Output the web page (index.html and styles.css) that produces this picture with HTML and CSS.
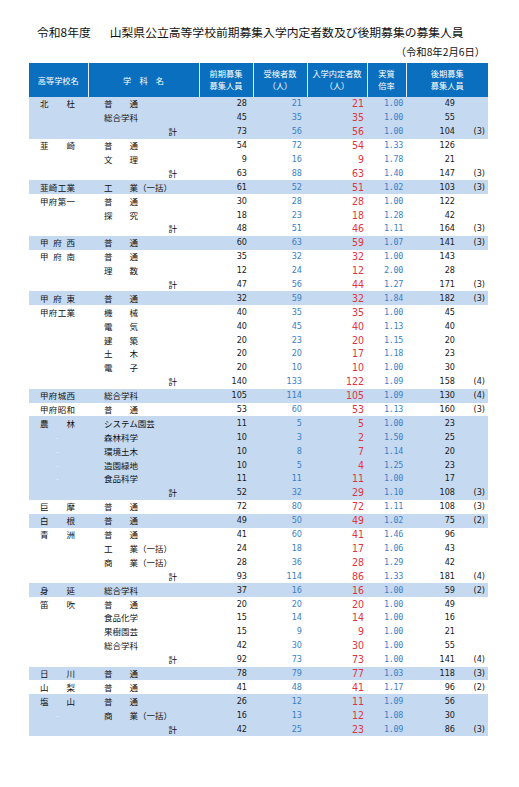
FILE: index.html
```html
<!DOCTYPE html>
<html lang="ja">
<head>
<meta charset="utf-8">
<title>令和8年度 山梨県公立高等学校前期募集入学内定者数及び後期募集の募集人員</title>
<link rel="stylesheet" href="styles.css">
</head>
<body>
<div class="page">
  <h1 class="title"><span class="yr">令和8年度</span><span class="main">山梨県公立高等学校前期募集入学内定者数及び後期募集の募集人員</span></h1>
  <p class="date">（令和8年2月6日）</p>
  <table class="tbl">
    <colgroup>
      <col class="w1"><col class="w2"><col class="w3"><col class="w4"><col class="w5"><col class="w6"><col class="w7">
    </colgroup>
    <thead>
      <tr>
        <th>高等学校名</th>
        <th>学　科　名</th>
        <th><span class="hl">前期募集</span><span class="hl">募集人員</span></th>
        <th><span class="hl">受検者数</span><span class="hl">（人）</span></th>
        <th><span class="hl">入学内定者数</span><span class="hl">（人）</span></th>
        <th><span class="hl">実質</span><span class="hl">倍率</span></th>
        <th><span class="hl">後期募集</span><span class="hl">募集人員</span></th>
      </tr>
    </thead>
    <tbody>
      <!-- 北杜 -->
      <tr class="s"><td class="sch">北　杜</td><td class="sub"><span class="j">普　通</span></td><td class="n3">28</td><td class="n4">21</td><td class="n5">21</td><td class="n6">1.00</td><td class="n7"><span class="kn">49</span><span class="kp"></span></td></tr>
      <tr class="s"><td class="sch"></td><td class="sub">総合学科</td><td class="n3">45</td><td class="n4">35</td><td class="n5">35</td><td class="n6">1.00</td><td class="n7"><span class="kn">55</span><span class="kp"></span></td></tr>
      <tr class="s"><td class="sch"></td><td class="sub tot">計</td><td class="n3">73</td><td class="n4">56</td><td class="n5">56</td><td class="n6">1.00</td><td class="n7"><span class="kn">104</span><span class="kp">(3)</span></td></tr>
      <!-- 韮崎 -->
      <tr><td class="sch">韮　崎</td><td class="sub"><span class="j">普　通</span></td><td class="n3">54</td><td class="n4">72</td><td class="n5">54</td><td class="n6">1.33</td><td class="n7"><span class="kn">126</span><span class="kp"></span></td></tr>
      <tr><td class="sch"></td><td class="sub"><span class="j">文　理</span></td><td class="n3">9</td><td class="n4">16</td><td class="n5">9</td><td class="n6">1.78</td><td class="n7"><span class="kn">21</span><span class="kp"></span></td></tr>
      <tr><td class="sch"></td><td class="sub tot">計</td><td class="n3">63</td><td class="n4">88</td><td class="n5">63</td><td class="n6">1.40</td><td class="n7"><span class="kn">147</span><span class="kp">(3)</span></td></tr>
      <!-- 韮崎工業 -->
      <tr class="s"><td class="sch">韮崎工業</td><td class="sub"><span class="j">工　業</span>（一括）</td><td class="n3">61</td><td class="n4">52</td><td class="n5">51</td><td class="n6">1.02</td><td class="n7"><span class="kn">103</span><span class="kp">(3)</span></td></tr>
      <!-- 甲府第一 -->
      <tr><td class="sch">甲府第一</td><td class="sub"><span class="j">普　通</span></td><td class="n3">30</td><td class="n4">28</td><td class="n5">28</td><td class="n6">1.00</td><td class="n7"><span class="kn">122</span><span class="kp"></span></td></tr>
      <tr><td class="sch"></td><td class="sub"><span class="j">探　究</span></td><td class="n3">18</td><td class="n4">23</td><td class="n5">18</td><td class="n6">1.28</td><td class="n7"><span class="kn">42</span><span class="kp"></span></td></tr>
      <tr><td class="sch"></td><td class="sub tot">計</td><td class="n3">48</td><td class="n4">51</td><td class="n5">46</td><td class="n6">1.11</td><td class="n7"><span class="kn">164</span><span class="kp">(3)</span></td></tr>
      <!-- 甲府西 -->
      <tr class="s"><td class="sch">甲府西</td><td class="sub"><span class="j">普　通</span></td><td class="n3">60</td><td class="n4">63</td><td class="n5">59</td><td class="n6">1.07</td><td class="n7"><span class="kn">141</span><span class="kp">(3)</span></td></tr>
      <!-- 甲府南 -->
      <tr><td class="sch">甲府南</td><td class="sub"><span class="j">普　通</span></td><td class="n3">35</td><td class="n4">32</td><td class="n5">32</td><td class="n6">1.00</td><td class="n7"><span class="kn">143</span><span class="kp"></span></td></tr>
      <tr><td class="sch"></td><td class="sub"><span class="j">理　数</span></td><td class="n3">12</td><td class="n4">24</td><td class="n5">12</td><td class="n6">2.00</td><td class="n7"><span class="kn">28</span><span class="kp"></span></td></tr>
      <tr><td class="sch"></td><td class="sub tot">計</td><td class="n3">47</td><td class="n4">56</td><td class="n5">44</td><td class="n6">1.27</td><td class="n7"><span class="kn">171</span><span class="kp">(3)</span></td></tr>
      <!-- 甲府東 -->
      <tr class="s"><td class="sch">甲府東</td><td class="sub"><span class="j">普　通</span></td><td class="n3">32</td><td class="n4">59</td><td class="n5">32</td><td class="n6">1.84</td><td class="n7"><span class="kn">182</span><span class="kp">(3)</span></td></tr>
      <!-- 甲府工業 -->
      <tr><td class="sch">甲府工業</td><td class="sub"><span class="j">機　械</span></td><td class="n3">40</td><td class="n4">35</td><td class="n5">35</td><td class="n6">1.00</td><td class="n7"><span class="kn">45</span><span class="kp"></span></td></tr>
      <tr><td class="sch"></td><td class="sub"><span class="j">電　気</span></td><td class="n3">40</td><td class="n4">45</td><td class="n5">40</td><td class="n6">1.13</td><td class="n7"><span class="kn">40</span><span class="kp"></span></td></tr>
      <tr><td class="sch"></td><td class="sub"><span class="j">建　築</span></td><td class="n3">20</td><td class="n4">23</td><td class="n5">20</td><td class="n6">1.15</td><td class="n7"><span class="kn">20</span><span class="kp"></span></td></tr>
      <tr><td class="sch"></td><td class="sub"><span class="j">土　木</span></td><td class="n3">20</td><td class="n4">20</td><td class="n5">17</td><td class="n6">1.18</td><td class="n7"><span class="kn">23</span><span class="kp"></span></td></tr>
      <tr><td class="sch"></td><td class="sub"><span class="j">電　子</span></td><td class="n3">20</td><td class="n4">10</td><td class="n5">10</td><td class="n6">1.00</td><td class="n7"><span class="kn">30</span><span class="kp"></span></td></tr>
      <tr><td class="sch"></td><td class="sub tot">計</td><td class="n3">140</td><td class="n4">133</td><td class="n5">122</td><td class="n6">1.09</td><td class="n7"><span class="kn">158</span><span class="kp">(4)</span></td></tr>
      <!-- 甲府城西 -->
      <tr class="s"><td class="sch">甲府城西</td><td class="sub">総合学科</td><td class="n3">105</td><td class="n4">114</td><td class="n5">105</td><td class="n6">1.09</td><td class="n7"><span class="kn">130</span><span class="kp">(4)</span></td></tr>
      <!-- 甲府昭和 -->
      <tr><td class="sch">甲府昭和</td><td class="sub"><span class="j">普　通</span></td><td class="n3">53</td><td class="n4">60</td><td class="n5">53</td><td class="n6">1.13</td><td class="n7"><span class="kn">160</span><span class="kp">(3)</span></td></tr>
      <!-- 農林 -->
      <tr class="s"><td class="sch">農　林</td><td class="sub">システム園芸</td><td class="n3">11</td><td class="n4">5</td><td class="n5">5</td><td class="n6">1.00</td><td class="n7"><span class="kn">23</span><span class="kp"></span></td></tr>
      <tr class="s"><td class="sch dash">-</td><td class="sub">森林科学</td><td class="n3">10</td><td class="n4">3</td><td class="n5">2</td><td class="n6">1.50</td><td class="n7"><span class="kn">25</span><span class="kp"></span></td></tr>
      <tr class="s"><td class="sch dash">-</td><td class="sub">環境土木</td><td class="n3">10</td><td class="n4">8</td><td class="n5">7</td><td class="n6">1.14</td><td class="n7"><span class="kn">20</span><span class="kp"></span></td></tr>
      <tr class="s"><td class="sch dash">-</td><td class="sub">造園緑地</td><td class="n3">10</td><td class="n4">5</td><td class="n5">4</td><td class="n6">1.25</td><td class="n7"><span class="kn">23</span><span class="kp"></span></td></tr>
      <tr class="s"><td class="sch dash">-</td><td class="sub">食品科学</td><td class="n3">11</td><td class="n4">11</td><td class="n5">11</td><td class="n6">1.00</td><td class="n7"><span class="kn">17</span><span class="kp"></span></td></tr>
      <tr class="s"><td class="sch"></td><td class="sub tot">計</td><td class="n3">52</td><td class="n4">32</td><td class="n5">29</td><td class="n6">1.10</td><td class="n7"><span class="kn">108</span><span class="kp">(3)</span></td></tr>
      <!-- 巨摩 -->
      <tr><td class="sch">巨　摩</td><td class="sub"><span class="j">普　通</span></td><td class="n3">72</td><td class="n4">80</td><td class="n5">72</td><td class="n6">1.11</td><td class="n7"><span class="kn">108</span><span class="kp">(3)</span></td></tr>
      <!-- 白根 -->
      <tr class="s"><td class="sch">白　根</td><td class="sub"><span class="j">普　通</span></td><td class="n3">49</td><td class="n4">50</td><td class="n5">49</td><td class="n6">1.02</td><td class="n7"><span class="kn">75</span><span class="kp">(2)</span></td></tr>
      <!-- 青洲 -->
      <tr><td class="sch">青　洲</td><td class="sub"><span class="j">普　通</span></td><td class="n3">41</td><td class="n4">60</td><td class="n5">41</td><td class="n6">1.46</td><td class="n7"><span class="kn">96</span><span class="kp"></span></td></tr>
      <tr><td class="sch"></td><td class="sub"><span class="j">工　業</span>（一括）</td><td class="n3">24</td><td class="n4">18</td><td class="n5">17</td><td class="n6">1.06</td><td class="n7"><span class="kn">43</span><span class="kp"></span></td></tr>
      <tr><td class="sch"></td><td class="sub"><span class="j">商　業</span>（一括）</td><td class="n3">28</td><td class="n4">36</td><td class="n5">28</td><td class="n6">1.29</td><td class="n7"><span class="kn">42</span><span class="kp"></span></td></tr>
      <tr><td class="sch"></td><td class="sub tot">計</td><td class="n3">93</td><td class="n4">114</td><td class="n5">86</td><td class="n6">1.33</td><td class="n7"><span class="kn">181</span><span class="kp">(4)</span></td></tr>
      <!-- 身延 -->
      <tr class="s"><td class="sch">身　延</td><td class="sub">総合学科</td><td class="n3">37</td><td class="n4">16</td><td class="n5">16</td><td class="n6">1.00</td><td class="n7"><span class="kn">59</span><span class="kp">(2)</span></td></tr>
      <!-- 笛吹 -->
      <tr><td class="sch">笛　吹</td><td class="sub"><span class="j">普　通</span></td><td class="n3">20</td><td class="n4">20</td><td class="n5">20</td><td class="n6">1.00</td><td class="n7"><span class="kn">49</span><span class="kp"></span></td></tr>
      <tr><td class="sch"></td><td class="sub">食品化学</td><td class="n3">15</td><td class="n4">14</td><td class="n5">14</td><td class="n6">1.00</td><td class="n7"><span class="kn">16</span><span class="kp"></span></td></tr>
      <tr><td class="sch"></td><td class="sub">果樹園芸</td><td class="n3">15</td><td class="n4">9</td><td class="n5">9</td><td class="n6">1.00</td><td class="n7"><span class="kn">21</span><span class="kp"></span></td></tr>
      <tr><td class="sch"></td><td class="sub">総合学科</td><td class="n3">42</td><td class="n4">30</td><td class="n5">30</td><td class="n6">1.00</td><td class="n7"><span class="kn">55</span><span class="kp"></span></td></tr>
      <tr><td class="sch"></td><td class="sub tot">計</td><td class="n3">92</td><td class="n4">73</td><td class="n5">73</td><td class="n6">1.00</td><td class="n7"><span class="kn">141</span><span class="kp">(4)</span></td></tr>
      <!-- 日川 -->
      <tr class="s"><td class="sch">日　川</td><td class="sub"><span class="j">普　通</span></td><td class="n3">78</td><td class="n4">79</td><td class="n5">77</td><td class="n6">1.03</td><td class="n7"><span class="kn">118</span><span class="kp">(3)</span></td></tr>
      <!-- 山梨 -->
      <tr><td class="sch">山　梨</td><td class="sub"><span class="j">普　通</span></td><td class="n3">41</td><td class="n4">48</td><td class="n5">41</td><td class="n6">1.17</td><td class="n7"><span class="kn">96</span><span class="kp">(2)</span></td></tr>
      <!-- 塩山 -->
      <tr class="s"><td class="sch">塩　山</td><td class="sub"><span class="j">普　通</span></td><td class="n3">26</td><td class="n4">12</td><td class="n5">11</td><td class="n6">1.09</td><td class="n7"><span class="kn">56</span><span class="kp"></span></td></tr>
      <tr class="s"><td class="sch dash">-</td><td class="sub"><span class="j">商　業</span>（一括）</td><td class="n3">16</td><td class="n4">13</td><td class="n5">12</td><td class="n6">1.08</td><td class="n7"><span class="kn">30</span><span class="kp"></span></td></tr>
      <tr class="s"><td class="sch"></td><td class="sub tot">計</td><td class="n3">42</td><td class="n4">25</td><td class="n5">23</td><td class="n6">1.09</td><td class="n7"><span class="kn">86</span><span class="kp">(3)</span></td></tr>
    </tbody>
  </table>
</div>
</body>
</html>
```
FILE: styles.css
```css
html, body {
  margin: 0;
  padding: 0;
  background: #ffffff;
}

body {
  font-family: "Noto Sans CJK JP", "Noto Sans", sans-serif;
  color: #111111;
}

.page {
  width: 519px;
}

.title {
  margin: 0;
  padding: 24px 0 0 37px;
  font-size: 11.8px;
  line-height: 15px;
  font-weight: normal;
  white-space: nowrap;
}

.title .main {
  margin-left: 19px;
}

.date {
  margin: 7px 0 0 0;
  padding-right: 34px;
  text-align: right;
  font-size: 10.3px;
  line-height: 12px;
}

.tbl {
  margin: 5px 0 0 29px;
  width: 459px;
  table-layout: fixed;
  border-collapse: collapse;
  border-spacing: 0;
}

.w1 { width: 59px; }
.w2 { width: 111px; }
.w3 { width: 54px; }
.w4 { width: 54px; }
.w5 { width: 60px; }
.w6 { width: 39px; }
.w7 { width: 82px; }

.tbl th {
  height: 34px;
  padding: 0;
  background: #0a6fbf;
  color: #ffffff;
  font-weight: normal;
  font-size: 8.2px;
  line-height: 12px;
  text-align: center;
  vertical-align: middle;
  border-left: 1px solid #e6eef8;
  white-space: nowrap;
}

.tbl th .hl {
  display: block;
  height: 11.9px;
  line-height: 11.9px;
}

.tbl th:first-child {
  border-left: none;
}

.tbl tbody tr {
  height: 13.9px;
}

.tbl tbody tr.s {
  background: #c5d9f1;
}

.tbl td {
  padding: 0;
  font-size: 8.5px;
  line-height: 13px;
  white-space: nowrap;
  vertical-align: middle;
  overflow: hidden;
}

.sch {
  padding: 0 13px 0 11px !important;
  text-align: justify;
  text-align-last: justify;
}

.sch.dash {
  text-align: center;
  text-align-last: center;
  color: rgba(255, 255, 255, 0.85);
  font-size: 7px;
}

.sub {
  padding-left: 16px !important;
}

.sub .j {
  display: inline-block;
  width: 34px;
  text-align: justify;
  text-align-last: justify;
}

.sub.tot {
  padding-left: 0 !important;
  padding-right: 22px !important;
  text-align: right;
}

.n3, .n4, .n5, .n6, .n7 {
  font-family: "Liberation Sans Narrow", "DejaVu Sans Condensed", "Liberation Sans", sans-serif;
  text-align: right;
}

.n3 {
  padding-right: 6px !important;
  font-size: 9px !important;
  color: #1a1a1a;
}

.n4 {
  padding-right: 5px !important;
  font-size: 9px !important;
  color: #3b7fc6;
}

.n5 {
  padding-right: 3px !important;
  font-size: 10.5px !important;
  color: #e2333f;
}

.n6 {
  padding-right: 3px !important;
  font-family: "DejaVu Sans Mono", "Liberation Mono", monospace;
  font-size: 8.4px !important;
  letter-spacing: -0.3px;
  color: #3b7fc6;
}

.n7 {
  text-align: left;
  font-size: 9px !important;
  color: #1a1a1a;
}

.kn {
  display: inline-block;
  width: 49px;
  text-align: right;
}

.kp {
  display: inline-block;
  width: 30px;
  text-align: right;
}
```
